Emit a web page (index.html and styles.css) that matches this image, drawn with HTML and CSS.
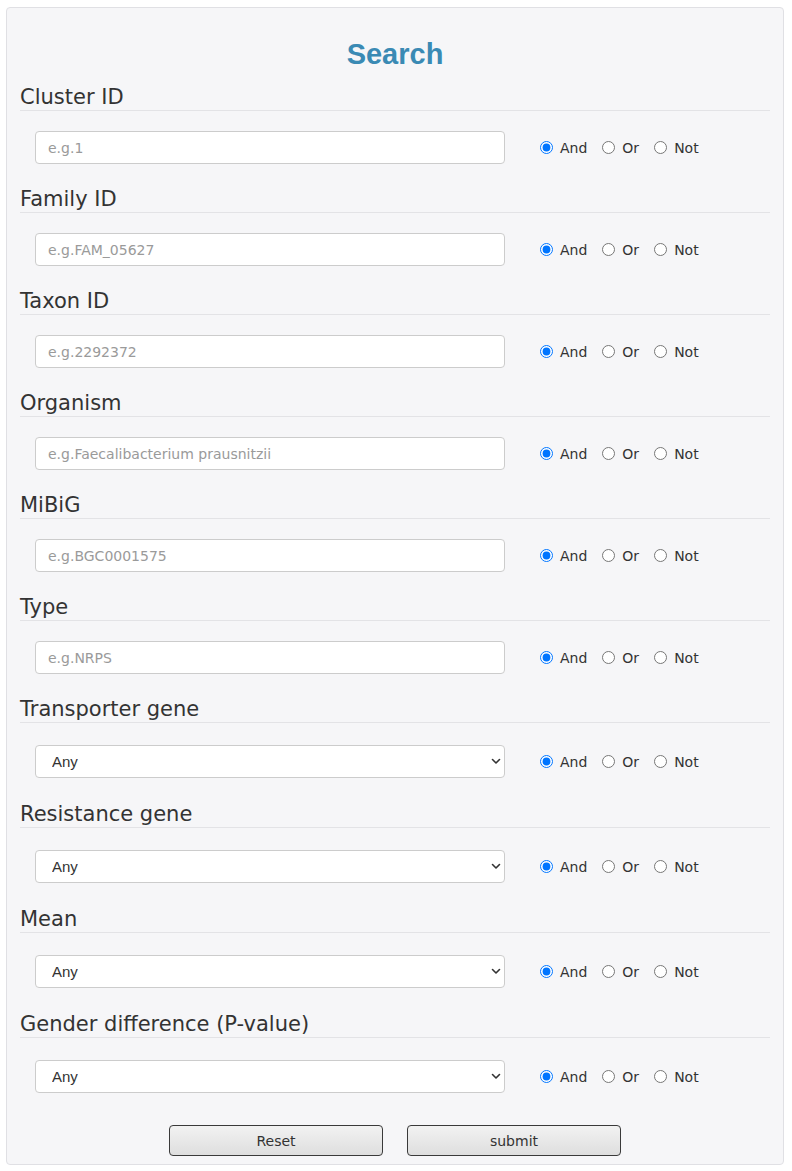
FILE: index.html
```html
<!DOCTYPE html>
<html>
<head>
<meta charset="utf-8">
<link rel="stylesheet" href="styles.css">
</head>
<body>
<form class="panel">
  <h1 class="title">Search</h1>

  <div class="section">
    <div class="label">Cluster ID</div>
    <div class="row">
      <input class="field" type="text" placeholder="e.g.1">
      <div class="ops">
        <label class="op"><input type="radio" name="r1" checked>And</label>
        <label class="op"><input type="radio" name="r1">Or</label>
        <label class="op"><input type="radio" name="r1">Not</label>
      </div>
    </div>
  </div>

  <div class="section">
    <div class="label">Family ID</div>
    <div class="row">
      <input class="field" type="text" placeholder="e.g.FAM_05627">
      <div class="ops">
        <label class="op"><input type="radio" name="r2" checked>And</label>
        <label class="op"><input type="radio" name="r2">Or</label>
        <label class="op"><input type="radio" name="r2">Not</label>
      </div>
    </div>
  </div>

  <div class="section">
    <div class="label">Taxon ID</div>
    <div class="row">
      <input class="field" type="text" placeholder="e.g.2292372">
      <div class="ops">
        <label class="op"><input type="radio" name="r3" checked>And</label>
        <label class="op"><input type="radio" name="r3">Or</label>
        <label class="op"><input type="radio" name="r3">Not</label>
      </div>
    </div>
  </div>

  <div class="section">
    <div class="label">Organism</div>
    <div class="row">
      <input class="field" type="text" placeholder="e.g.Faecalibacterium prausnitzii">
      <div class="ops">
        <label class="op"><input type="radio" name="r4" checked>And</label>
        <label class="op"><input type="radio" name="r4">Or</label>
        <label class="op"><input type="radio" name="r4">Not</label>
      </div>
    </div>
  </div>

  <div class="section">
    <div class="label">MiBiG</div>
    <div class="row">
      <input class="field" type="text" placeholder="e.g.BGC0001575">
      <div class="ops">
        <label class="op"><input type="radio" name="r5" checked>And</label>
        <label class="op"><input type="radio" name="r5">Or</label>
        <label class="op"><input type="radio" name="r5">Not</label>
      </div>
    </div>
  </div>

  <div class="section">
    <div class="label">Type</div>
    <div class="row">
      <input class="field" type="text" placeholder="e.g.NRPS">
      <div class="ops">
        <label class="op"><input type="radio" name="r6" checked>And</label>
        <label class="op"><input type="radio" name="r6">Or</label>
        <label class="op"><input type="radio" name="r6">Not</label>
      </div>
    </div>
  </div>

  <div class="section sel">
    <div class="label">Transporter gene</div>
    <div class="row">
      <div class="select-wrap">
        <select class="field select"><option>Any</option></select>
        <svg class="chev" width="10" height="7" viewBox="0 0 10 7"><path d="M1.5 1.5 L5 5 L8.5 1.5" fill="none" stroke="#333" stroke-width="1.6" stroke-linecap="round" stroke-linejoin="round"/></svg>
      </div>
      <div class="ops">
        <label class="op"><input type="radio" name="r7" checked>And</label>
        <label class="op"><input type="radio" name="r7">Or</label>
        <label class="op"><input type="radio" name="r7">Not</label>
      </div>
    </div>
  </div>

  <div class="section sel">
    <div class="label">Resistance gene</div>
    <div class="row">
      <div class="select-wrap">
        <select class="field select"><option>Any</option></select>
        <svg class="chev" width="10" height="7" viewBox="0 0 10 7"><path d="M1.5 1.5 L5 5 L8.5 1.5" fill="none" stroke="#333" stroke-width="1.6" stroke-linecap="round" stroke-linejoin="round"/></svg>
      </div>
      <div class="ops">
        <label class="op"><input type="radio" name="r8" checked>And</label>
        <label class="op"><input type="radio" name="r8">Or</label>
        <label class="op"><input type="radio" name="r8">Not</label>
      </div>
    </div>
  </div>

  <div class="section sel">
    <div class="label">Mean</div>
    <div class="row">
      <div class="select-wrap">
        <select class="field select"><option>Any</option></select>
        <svg class="chev" width="10" height="7" viewBox="0 0 10 7"><path d="M1.5 1.5 L5 5 L8.5 1.5" fill="none" stroke="#333" stroke-width="1.6" stroke-linecap="round" stroke-linejoin="round"/></svg>
      </div>
      <div class="ops">
        <label class="op"><input type="radio" name="r9" checked>And</label>
        <label class="op"><input type="radio" name="r9">Or</label>
        <label class="op"><input type="radio" name="r9">Not</label>
      </div>
    </div>
  </div>

  <div class="section sel last">
    <div class="label">Gender difference (P-value)</div>
    <div class="row">
      <div class="select-wrap">
        <select class="field select"><option>Any</option></select>
        <svg class="chev" width="10" height="7" viewBox="0 0 10 7"><path d="M1.5 1.5 L5 5 L8.5 1.5" fill="none" stroke="#333" stroke-width="1.6" stroke-linecap="round" stroke-linejoin="round"/></svg>
      </div>
      <div class="ops">
        <label class="op"><input type="radio" name="r10" checked>And</label>
        <label class="op"><input type="radio" name="r10">Or</label>
        <label class="op"><input type="radio" name="r10">Not</label>
      </div>
    </div>
  </div>

  <div class="buttons">
    <button type="reset" class="btn">Reset</button>
    <button type="button" class="btn">submit</button>
  </div>
</form>
</body>
</html>
```

FILE: styles.css
```css
html, body {
  margin: 0;
  padding: 0;
  background: #ffffff;
}
body {
  padding: 7px 7px 0 6px;
  font-family: "DejaVu Sans", Verdana, sans-serif;
  color: #333333;
}
.panel {
  display: block;
  width: 778px;
  box-sizing: border-box;
  background: #f6f6f8;
  border: 1px solid #e0e0e4;
  border-radius: 4px;
  padding: 29px 13px 8px 13px;
}
.title {
  margin: 0 0 13px 0;
  text-align: center;
  font-family: "Liberation Sans", Arial, sans-serif;
  font-weight: bold;
  font-size: 29px;
  line-height: 34px;
  color: #3a8ab4;
}
.section {
  padding-bottom: 22px;
}
.section.sel {
  padding-bottom: 23px;
}
.section.last {
  padding-bottom: 32px;
}
.label {
  font-size: 21px;
  line-height: 24px;
  padding: 1px 0 1px 0;
  border-bottom: 1px solid #e3e3e6;
  color: #333333;
}
.row {
  display: flex;
  align-items: center;
  margin-top: 20px;
  padding-left: 15px;
}
.section.sel .row {
  margin-top: 22px;
}
.field {
  box-sizing: border-box;
  width: 470px;
  height: 33px;
  margin: 0;
  border: 1px solid #cccccc;
  border-radius: 4px;
  background: #ffffff;
  padding: 0 12px;
  font-family: "DejaVu Sans", Verdana, sans-serif;
  font-size: 14px;
  color: #333333;
  outline: none;
}
.field::placeholder {
  color: #9a9a9a;
}
.select-wrap {
  position: relative;
  width: 470px;
  height: 33px;
}
.select {
  -webkit-appearance: none;
  appearance: none;
  padding: 0 30px 0 16px;
  font-family: "Liberation Sans", Arial, sans-serif;
  font-size: 15px;
  color: #333333;
}
.chev {
  position: absolute;
  right: 4px;
  top: 13px;
  pointer-events: none;
}
.ops {
  display: flex;
  align-items: center;
  margin-left: 35px;
  font-size: 14px;
  color: #333333;
}
.op {
  display: flex;
  align-items: center;
  margin-right: 15px;
  line-height: 16px;
}
.op input {
  width: 13px;
  height: 13px;
  margin: 0 7px 0 0;
}
.buttons {
  display: flex;
  justify-content: center;
  gap: 24px;
}
.btn {
  width: 214px;
  height: 31px;
  box-sizing: border-box;
  border: 1px solid #3a3a3a;
  border-radius: 4px;
  background: linear-gradient(#f2f2f2, #dedede);
  font-family: "DejaVu Sans", Verdana, sans-serif;
  font-size: 14px;
  color: #333333;
  padding: 0;
  margin: 0;
}
```
